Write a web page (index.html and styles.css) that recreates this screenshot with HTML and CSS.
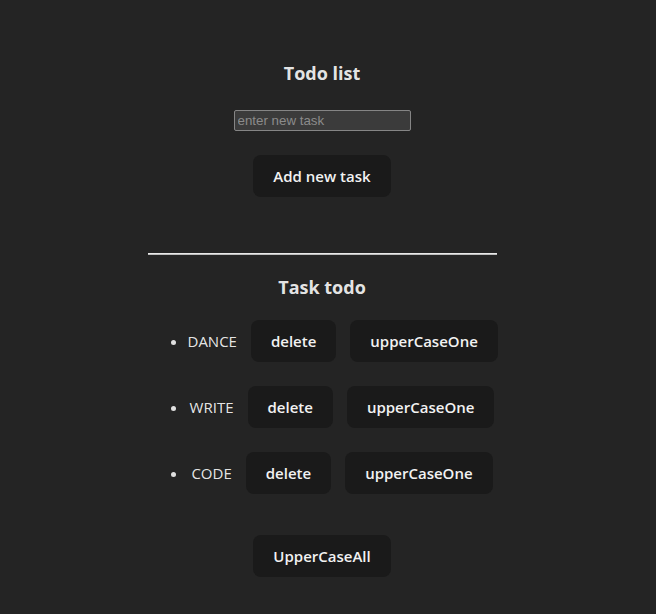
FILE: index.html
```html
<!DOCTYPE html>
<html lang="en">
<head>
<meta charset="utf-8">
<title>Todo list</title>
<link rel="stylesheet" href="styles.css">
</head>
<body>
<div class="page">
  <div class="app">
    <h3 class="title">Todo list</h3>
    <input class="task-input" type="text" placeholder="enter new task">
    <button class="btn add-btn">Add new task</button>
    <hr class="divider">
    <h3 class="title sub">Task todo</h3>
    <ul class="tasks">
      <li class="task"><span class="task-name">DANCE</span><button class="btn">delete</button><button class="btn">upperCaseOne</button></li>
      <li class="task"><span class="task-name">WRITE</span><button class="btn">delete</button><button class="btn">upperCaseOne</button></li>
      <li class="task"><span class="task-name">CODE</span><button class="btn">delete</button><button class="btn">upperCaseOne</button></li>
    </ul>
    <button class="btn all-btn">UpperCaseAll</button>
  </div>
</div>
</body>
</html>
```
FILE: styles.css
```css
html, body {
  margin: 0;
  padding: 0;
  background: #242424;
}
body {
  font-family: "Open Sans", "Noto Sans", sans-serif;
  color: rgba(255, 255, 255, 0.9);
  min-height: 614px;
}
.page {
  display: flex;
  justify-content: center;
  padding: 61px 12px 0 0;
}
.app {
  width: 349px;
  display: flex;
  flex-direction: column;
  align-items: center;
  text-align: center;
}
.title {
  margin: 0;
  font-size: 18px;
  line-height: 25px;
  font-weight: 700;
}
.title.sub {
  margin-top: 20px;
}
.task-input {
  margin-top: 24px;
  box-sizing: border-box;
  width: 177px;
  height: 21px;
  padding: 1px 3px;
  background: #3b3b3b;
  border: 1px solid #858585;
  border-radius: 2px;
  color: #ddd;
  font-family: "Liberation Sans", Arial, sans-serif;
  font-size: 13.33px;
  outline: none;
}
.task-input::placeholder {
  color: #8b8b8b;
}
.btn {
  box-sizing: border-box;
  height: 42px;
  padding: 0 19px;
  border: 1px solid transparent;
  border-radius: 8px;
  background: #1a1a1a;
  color: #f2f2f2;
  font-family: "Open Sans", "Noto Sans", sans-serif;
  font-size: 15px;
  font-weight: 600;
  cursor: pointer;
}
.add-btn {
  margin-top: 24px;
}
.divider {
  align-self: stretch;
  margin: 56px 0 0;
  height: 0;
  border: none;
  border-top: 1px solid #e8e8e8;
  border-bottom: 1px solid #bdbdbd;
}
.tasks {
  align-self: stretch;
  margin: 20px 0 0;
  padding: 0 0 0 40px;
  list-style: disc outside;
}
.task {
  text-align: center;
  white-space: nowrap;
  font-size: 15px;
  line-height: 42px;
  height: 42px;
  margin-bottom: 24px;
}
.task:last-child {
  margin-bottom: 0;
}
.task::marker {
  color: #e0e0e0;
}
.task-name {
  font-weight: 400;
}
.task .btn {
  margin-left: 14px;
  vertical-align: top;
}
.all-btn {
  margin-top: 41px;
}
```
